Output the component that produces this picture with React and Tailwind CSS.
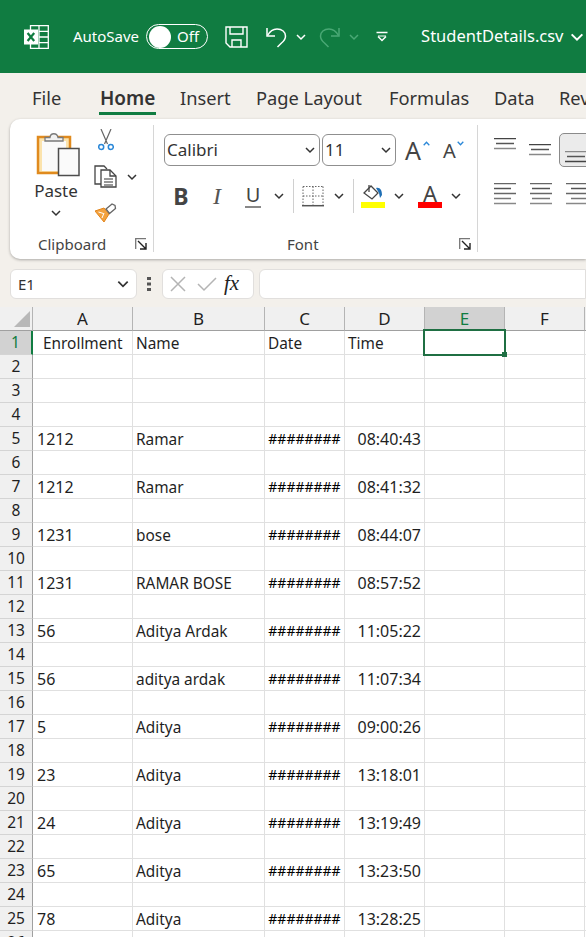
import React from 'react';

const FONT = '"Noto Sans", "Open Sans", sans-serif';

const Chevron = ({ size = 12, color = '#333', width = 1.5, className = '' }) => (
  <svg width={size} height={size} viewBox="0 0 12 12" fill="none" className={className}>
    <path d="M2 4l4 4 4-4" stroke={color} strokeWidth={width} />
  </svg>
);

const ExcelLogo = () => (
  <svg width="25" height="24" viewBox="0 0 25 24" fill="none">
    <path d="M6.5.7h17.8v22.6H6.5z" stroke="#fff" strokeWidth="1.3" />
    <path d="M15 .7v22.6M15 6.3h9M15 12h9M15 17.7h9" stroke="#fff" strokeWidth="1.3" />
    <rect x="0" y="4.5" width="14" height="15" fill="#fff" />
    <path d="M3.6 8l6.6 8M10.2 8l-6.6 8" stroke="#107c41" strokeWidth="2.2" />
  </svg>
);

const SaveIcon = () => (
  <svg width="23" height="22" viewBox="0 0 23 22" fill="none" stroke="#fff" strokeWidth="1.4">
    <path d="M1 1h21v20H5l-4-4z" />
    <path d="M5 1v7h13V1M7 21v-7h9v7" />
  </svg>
);

const UndoIcon = () => (
  <svg width="21" height="22" viewBox="0 0 21 22" fill="none" stroke="#fff" strokeWidth="1.5">
    <path d="M1 2v8h8" />
    <path d="M1.5 9.5C4 5 7 3 11 3c5 0 8.5 3 8.5 7 0 3-1.5 5-4 7l-4 4" />
  </svg>
);

const RedoIcon = () => (
  <svg width="21" height="22" viewBox="0 0 21 22" fill="none" stroke="#4aa875" strokeWidth="1.5">
    <path d="M20 2v8h-8" />
    <path d="M19.5 9.5C17 5 14 3 10 3c-5 0-8.5 3-8.5 7 0 3 1.5 5 4 7l4 4" />
  </svg>
);

const Customize = () => (
  <svg width="12" height="12" viewBox="0 0 12 12" fill="none" stroke="#fff" strokeWidth="1.5">
    <path d="M.5 1.5h11M2 5.5l4 4 4-4" />
    <path d="M2 5h8" strokeWidth="1" />
  </svg>
);

const PasteIcon = () => (
  <svg width="44" height="48" viewBox="0 0 44 48" fill="none">
    <rect x="2" y="7" width="32" height="36" fill="#fbe3ad" stroke="#e08a1e" strokeWidth="2.5" />
    <rect x="6" y="11" width="24" height="30" fill="#fafafa" />
    <path d="M9 11V7.5h5c.5-5 7-5 8 0h5V11z" fill="#f2f2f2" stroke="#7a7a7a" strokeWidth="1.3" />
    <rect x="22.5" y="18.5" width="20.5" height="27" fill="#fafafa" stroke="#4d4d4d" strokeWidth="1.5" />
  </svg>
);

const ScissorsIcon = () => (
  <svg width="16" height="22" viewBox="0 0 16 22" fill="none">
    <path d="M3 0l6.5 15M13 0L6.5 15" stroke="#666" strokeWidth="1.2" />
    <circle cx="3.2" cy="18" r="2.5" stroke="#2b88d8" strokeWidth="1.5" />
    <circle cx="12.8" cy="18" r="2.5" stroke="#2b88d8" strokeWidth="1.5" />
  </svg>
);

const CopyIcon = () => (
  <svg width="23" height="23" viewBox="0 0 23 23" fill="none" stroke="#444" strokeWidth="1.3">
    <path d="M7 19H1V1h9l3 3" />
    <path d="M7 5h9l6 6v11H7z" fill="#fff" />
    <path d="M16 5v6h6" />
    <path d="M10 14h9M10 17h9M10 20h9" stroke="#777" />
  </svg>
);

const BrushIcon = () => (
  <svg width="22" height="20" viewBox="0 0 22 20" fill="none">
    <path d="M0 8l9-3 5 6-5 8z" fill="#f3a23f" stroke="#e2861d" strokeWidth="1" />
    <path d="M3.5 9l5 1.5M7 15l2-5" stroke="#fff" strokeWidth="1" />
    <path d="M11 6l6-5 3 1.5.5 3-6 5z" fill="#fff" stroke="#666" strokeWidth="1.3" />
  </svg>
);

const Launcher = () => (
  <svg width="12" height="12" viewBox="0 0 12 12" fill="none">
    <path d="M.7 11V.7H11" stroke="#777" strokeWidth="1.3" />
    <path d="M3 3l7.5 7.5M5 11h6V5" stroke="#222" strokeWidth="1.4" />
  </svg>
);

const Caret = ({ up }) => (
  <svg width="7" height="5" viewBox="0 0 7 5" fill="none">
    <path d={up ? 'M.7 4.3l2.8-3 2.8 3' : 'M.7.7l2.8 3 2.8-3'} stroke="#2b88d8" strokeWidth="1.3" />
  </svg>
);

const BordersIcon = () => (
  <svg width="22" height="21" viewBox="0 0 22 21" fill="none">
    <path d="M1 .5h20M1 10h20M1 .5v19M11 .5v19M21 .5v19" stroke="#666" strokeWidth="1" strokeDasharray="1.5 1.5" />
    <path d="M0 19.7h22" stroke="#555" strokeWidth="1.5" />
  </svg>
);

const FillIcon = () => (
  <svg width="24" height="24" viewBox="0 0 24 24" fill="none">
    <path d="M3 9l7-7 7 7-6 6z" fill="#fff" stroke="#444" strokeWidth="1.3" />
    <path d="M8 1v7" stroke="#444" strokeWidth="1.3" />
    <path d="M15 4c4-1 6 2 6 7l-2 3-1-5z" fill="#1f6fb5" />
    <rect y="18" width="24" height="6" fill="#ffff00" />
  </svg>
);

const AlignLines = ({ rows, width = 22 }) => (
  <svg width={width} height={rows[rows.length - 1][0] + 2} fill="none">
    {rows.map(([y, x1, x2, color]) => (
      <path key={y} d={`M${x1} ${y}.5H${x2}`} stroke={color} strokeWidth="1.5" />
    ))}
  </svg>
);

const Group = ({ label, labelClass, launcher, width, children }) => (
  <div className="flex flex-col shrink-0 h-full" style={{ width }}>
    <div className="flex-1 min-h-0">{children}</div>
    {label && (
      <div className={`flex items-center justify-between h-[20px] mb-[5px] pr-[6px] text-[15px] text-[#444] ${labelClass}`}>
        <span>{label}</span>
        {launcher && <Launcher />}
      </div>
    )}
  </div>
);

const Divider = () => <div className="w-px h-[127px] mt-[6px] shrink-0 bg-[#d6d6d6]" />;

const ClipboardGroup = () => (
  <Group label="Clipboard" labelClass="pl-[28px]" launcher width={143}>
    <div className="flex pl-[22px] pt-[10px]">
      <div className="flex flex-col items-center w-[48px]">
        <div className="pl-[4px] mt-[1px]"><PasteIcon /></div>
        <div className="text-[17px] leading-[24px] text-[#333] mt-px">Paste</div>
        <Chevron className="mt-[4px]" />
      </div>
      <div className="ml-[14px] flex flex-col">
        <div className="pl-[4px] h-[22px]"><ScissorsIcon /></div>
        <div className="flex items-center mt-[14px]">
          <CopyIcon />
          <Chevron className="ml-[9px]" />
        </div>
        <div className="mt-[15px] pl-px"><BrushIcon /></div>
      </div>
    </div>
  </Group>
);

const SelectBox = ({ value, width }) => (
  <div
    className="flex items-center justify-between h-[32px] pl-[2px] pr-[3px] bg-white border border-[#8f8f8f] rounded-[6px] text-[17px] text-[#333]"
    style={{ width }}
  >
    <span>{value}</span>
    <Chevron />
  </div>
);

const Cell = ({ width, children, className = '' }) => (
  <div className={`flex items-center justify-center shrink-0 h-[24px] ${className}`} style={{ width }}>
    {children}
  </div>
);

const FontGroup = () => (
  <Group label="Font" labelClass="pl-[133px]" launcher width={323}>
    <div className="pl-[10px] pt-[14px]">
      <div className="flex items-center">
        <SelectBox value="Calibri" width={156} />
        <div className="w-[2px]" />
        <SelectBox value="11" width={74} />
        <span className="ml-[9px] text-[25px] leading-[32px] text-[#444]">A</span>
        <span className="mb-[14px] ml-[2px]"><Caret up /></span>
        <span className="ml-[13px] text-[20px] leading-[32px] text-[#444] pt-[2px]">A</span>
        <span className="mb-[14px] ml-px"><Caret /></span>
      </div>
      <div className="flex items-center mt-[12px]">
        <Cell width={34}><span className="text-[23px] font-bold text-[#444]">B</span></Cell>
        <Cell width={38}><span className="text-[24px] italic text-[#555] font-['Liberation_Serif']">I</span></Cell>
        <Cell width={34}><span className="text-[20px] text-[#444] border-b-2 border-[#888] leading-[22px] px-px">U</span></Cell>
        <Cell width={18}><Chevron /></Cell>
        <div className="ml-[5px] w-px h-[34px] bg-[#d0d0d0]" />
        <Cell width={37}><BordersIcon /></Cell>
        <Cell width={16}><Chevron /></Cell>
        <div className="ml-[6px] w-px h-[34px] bg-[#d0d0d0]" />
        <Cell width={38}><FillIcon /></Cell>
        <Cell width={14}><Chevron /></Cell>
        <Cell width={36} className="ml-[6px]">
          <div className="flex flex-col items-center w-[24px]">
            <span className="text-[22px] leading-[18px] text-[#444]">A</span>
            <div className="w-[24px] h-[6px] bg-[#ff0000]" />
          </div>
        </Cell>
        <Cell width={16}><Chevron /></Cell>
      </div>
    </div>
  </Group>
);

const AlignGroup = () => (
  <Group width={140}>
    <div className="pl-[16px] pt-[14px]">
      <div className="flex h-[34px]">
        <div className="w-[36px] pt-[5px]">
          <AlignLines rows={[[0, 0, 22, '#444'], [5, 2, 20, '#555'], [10, 0, 22, '#888']]} />
        </div>
        <div className="w-[36px] pt-[11px]">
          <AlignLines rows={[[0, 0, 22, '#444'], [5, 2, 20, '#555'], [10, 0, 22, '#888']]} />
        </div>
        <div className="-ml-[6px] w-[60px] h-[34px] pl-[5px] pt-[17px] bg-[#ebebeb] border border-[#8a8a8a] rounded-[5px]">
          <AlignLines rows={[[0, 0, 22, '#888'], [5, 2, 20, '#555'], [10, 0, 22, '#444']]} />
        </div>
      </div>
      <div className="flex mt-[16px]">
        <div className="w-[36px]">
          <AlignLines rows={[[0, 0, 22, '#666'], [5, 0, 17, '#555'], [10, 0, 22, '#666'], [15, 0, 17, '#777'], [20, 0, 22, '#888']]} />
        </div>
        <div className="w-[36px]">
          <AlignLines rows={[[0, 0, 22, '#666'], [5, 2, 20, '#555'], [10, 0, 22, '#666'], [15, 2, 20, '#777'], [20, 0, 22, '#888']]} />
        </div>
        <div>
          <AlignLines rows={[[0, 0, 22, '#666'], [5, 5, 22, '#555'], [10, 0, 22, '#666'], [15, 5, 22, '#777'], [20, 0, 22, '#888']]} />
        </div>
      </div>
    </div>
  </Group>
);

const tabs = [
  { name: 'File', width: 68 },
  { name: 'Home', width: 80, active: true },
  { name: 'Insert', width: 76 },
  { name: 'Page Layout', width: 133 },
  { name: 'Formulas', width: 105 },
  { name: 'Data', width: 65 },
  { name: 'Review', width: 60 },
];

const columns = ['A', 'B', 'C', 'D', 'E', 'F', 'G'];

const rows = {
  5: ['1212', 'Ramar', '08:40:43'],
  7: ['1212', 'Ramar', '08:41:32'],
  9: ['1231', 'bose', '08:44:07'],
  11: ['1231', 'RAMAR BOSE', '08:57:52'],
  13: ['56', 'Aditya Ardak', '11:05:22'],
  15: ['56', 'aditya ardak', '11:07:34'],
  17: ['5', 'Aditya', '09:00:26'],
  19: ['23', 'Aditya', '13:18:01'],
  21: ['24', 'Aditya', '13:19:49'],
  23: ['65', 'Aditya', '13:23:50'],
  25: ['78', 'Aditya', '13:28:25'],
};

const cellClass = 'h-[24px] border-r border-b border-[#e0e0e0] flex items-center whitespace-nowrap';
const headCell = 'h-[24px] border-r border-b border-r-[#b4b4b4] border-b-[#a0a0a0] flex text-[17px]';

const Sheet = () => (
  <div className="grid grid-cols-[33px_100px_132px_80px_80px_80px_80px_40px] text-[15.4px] text-[#1f1f1f] bg-white">
    <div className={`${headCell} bg-[#f0f0f0] items-end justify-end pr-[2px] pb-[3px]`}>
      <svg width="16" height="16" viewBox="0 0 16 16"><path d="M16 0v16H0z" fill="#b8b8b8" /></svg>
    </div>
    {columns.map((col) => (
      <div key={col} className={`${headCell} items-center justify-center ${col === 'E' ? 'bg-[#d2d2d2] text-[#107c41]' : 'bg-[#f0f0f0]'}`}>
        {col}
      </div>
    ))}
    {Array.from({ length: 26 }, (_, i) => i + 1).map((n) => {
      const row = rows[n];
      const isFirst = n === 1;
      return (
        <React.Fragment key={n}>
          <div className={`h-[24px] flex items-center justify-center text-[15.5px] border-b border-b-[#d4d4d4] ${isFirst ? 'bg-[#d2d2d2] text-[#107c41] border-r-2 border-r-[#107c41]' : 'bg-[#f0f0f0] border-r border-r-[#a0a0a0]'}`}>
            {n}
          </div>
          <div className={`${cellClass} ${isFirst ? 'pl-[10px] pt-[2px]' : 'pl-[4px] pt-px text-[16px]'}`}>{isFirst ? 'Enrollment' : row?.[0]}</div>
          <div className={`${cellClass} pl-[3px] pt-[2px]`}>{isFirst ? 'Name' : row?.[1]}</div>
          <div className={`${cellClass} ${isFirst ? 'pl-[3px] pt-[2px]' : 'justify-center text-[14px] text-black'}`}>{isFirst ? 'Date' : row && '########'}</div>
          <div className={`${cellClass} ${isFirst ? 'pl-[3px] pt-[2px]' : 'justify-end pr-[3px] pt-px text-[16px]'}`}>{isFirst ? 'Time' : row?.[2]}</div>
          <div className={`${cellClass} relative`}>
            {isFirst && (
              <div className="absolute -left-[2px] -right-[2px] -top-[2px] -bottom-[2px] border-2 border-[#1f6f43] z-10">
                <div className="absolute -right-[3px] -bottom-[3px] w-[5px] h-[5px] bg-[#1f6f43]" />
              </div>
            )}
          </div>
          <div className={cellClass} />
          <div className={cellClass} />
        </React.Fragment>
      );
    })}
  </div>
);

export default function App() {
  return (
    <div className="w-[586px] h-[937px] overflow-hidden bg-[#f3f0eb]" style={{ fontFamily: FONT }}>
      {/* title bar */}
      <div className="flex items-center h-[73px] pl-[24px] bg-[#107c41] text-white whitespace-nowrap">
        <ExcelLogo />
        <span className="ml-[24px] text-[15px]">AutoSave</span>
        <div className="ml-[7px] flex items-center w-[62px] h-[25px] pl-[2px] border border-white rounded-full">
          <div className="w-[22px] h-[22px] rounded-full bg-white" />
          <span className="ml-[6px] text-[15px]">Off</span>
        </div>
        <div className="ml-[17px]"><SaveIcon /></div>
        <div className="ml-[18px]"><UndoIcon /></div>
        <Chevron color="#fff" className="ml-[8px]" />
        <div className="ml-[12px]"><RedoIcon /></div>
        <Chevron color="#4aa875" className="ml-[8px]" />
        <div className="ml-[16px]"><Customize /></div>
        <span className="ml-[33px] text-[16.5px]">StudentDetails.csv</span>
        <Chevron size={16} color="#fff" className="ml-[5px]" />
      </div>

      {/* tabs */}
      <div className="flex h-[46px] pl-[32px] text-[18.3px] text-[#333] whitespace-nowrap">
        {tabs.map((tab) => (
          <div key={tab.name} className="shrink-0 pt-[12px] leading-[26px]" style={{ width: tab.width }}>
            <span className={`relative inline-block ${tab.active ? 'font-semibold text-[19px]' : ''}`}>
              {tab.name}
              {tab.active && <span className="absolute -left-px -right-px top-[27px] h-[3px] bg-[#107c41]" />}
            </span>
          </div>
        ))}
      </div>

      {/* ribbon */}
      <div className="flex ml-[10px] h-[140px] bg-white rounded-l-[10px] shadow-[0_1px_3px_rgba(0,0,0,0.3)]">
        <ClipboardGroup />
        <Divider />
        <FontGroup />
        <Divider />
        <AlignGroup />
      </div>

      {/* formula bar */}
      <div className="flex items-center h-[30px] mt-[10px] mb-[8px] pl-[10px] text-[15px] text-[#333]">
        <div className="flex items-center justify-between w-[127px] h-full pl-[7px] pr-[6px] bg-white border border-[#e1dfdd] rounded-[6px]">
          <span>E1</span>
          <Chevron size={14} />
        </div>
        <svg width="4" height="14" className="ml-[10px]" viewBox="0 0 4 14" fill="#555">
          <rect y="0" width="4" height="3" /><rect y="5.5" width="4" height="3" /><rect y="11" width="4" height="3" />
        </svg>
        <div className="flex items-center ml-[11px] w-[92px] h-full bg-white border border-[#e1dfdd] rounded-[6px]">
          <svg width="16" height="16" viewBox="0 0 16 16" className="ml-[7px]" fill="none"><path d="M1 1l14 14M15 1L1 15" stroke="#b4b4b4" strokeWidth="1.5" /></svg>
          <svg width="20" height="16" viewBox="0 0 20 16" className="ml-[11px]" fill="none"><path d="M1 8l6 6L19 2" stroke="#b4b4b4" strokeWidth="1.5" /></svg>
          <span className="ml-[7px] text-[21px] italic text-[#222] font-['Liberation_Serif']">fx</span>
        </div>
        <div className="ml-[5px] flex-1 h-full bg-white border border-[#e1dfdd] rounded-l-[6px]" />
      </div>

      <Sheet />
    </div>
  );
}
